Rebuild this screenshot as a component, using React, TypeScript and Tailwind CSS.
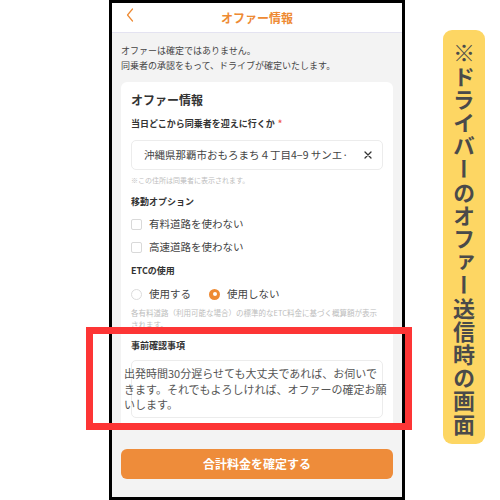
import React from "react";

const font = { fontFamily: '"Noto Sans CJK JP", "Noto Sans", sans-serif' };

export default function App() {
  return (
    <div className="relative w-[500px] h-[500px] bg-white flex flex-row" style={font}>
      {/* phone */}
      <div className="ml-[109px] w-[296px] h-[500px] border-[3px] border-black flex flex-col overflow-hidden bg-[#f3f3f3]">
        {/* header */}
        <div className="relative h-[30px] shrink-0 bg-white border-b border-[#e4e3f1] flex items-center justify-center">
          <svg className="absolute left-[14px] top-[5px]" width="8" height="14" viewBox="0 0 8 14" fill="none">
            <path d="M6.5 1 L1.5 7 L6.5 13" stroke="#ee8a33" strokeWidth="1.2" strokeLinecap="round" strokeLinejoin="round" />
          </svg>
          <span className="text-[12px] font-bold text-[#ee8a33] leading-none">オファー情報</span>
        </div>
        {/* content */}
        <div className="flex flex-col px-[9px]">
          <div className="mt-[10px] text-[9px] leading-[15px] text-[#444]">
            <div>オファーは確定ではありません。</div>
            <div>同乗者の承認をもって、ドライブが確定いたします。</div>
          </div>
          {/* card */}
          <div className="mt-[9px] bg-white rounded-[6px] px-[10px] pt-[9px] pb-[12px] flex flex-col">
            <div className="h-[18px] flex items-center text-[12px] font-bold text-[#333]">オファー情報</div>
            <div className="mt-[8px] h-[14px] flex items-center text-[9px] font-bold text-[#333]">
              当日どこから同乗者を迎えに行くか<span className="ml-[3px] text-[#f05a4a]">*</span>
            </div>
            <div className="mt-[9px] h-[30px] border border-[#ececec] rounded-[5px] flex items-center pl-[12px] pr-[10px]">
              <span className="flex-1 text-[10.5px] text-[#444] whitespace-nowrap overflow-hidden">沖縄県那覇市おもろまち４丁目4−9 サンエ·</span>
              <svg width="8" height="8" viewBox="0 0 8 8" className="ml-[8px]">
                <path d="M1 1 L7 7 M7 1 L1 7" stroke="#333" strokeWidth="1.3" strokeLinecap="round" />
              </svg>
            </div>
            <div className="mt-[4px] h-[12px] flex items-center text-[7px] text-[#bdbdbd]">※この住所は同乗者に表示されます。</div>
            <div className="mt-[9px] h-[14px] flex items-center text-[9px] font-bold text-[#333]">移動オプション</div>
            <div className="mt-[5px] h-[20px] flex items-center">
              <div className="w-[11px] h-[11px] border border-[#d9d9d9] rounded-[2px]" />
              <span className="ml-[7px] text-[10.5px] text-[#444]">有料道路を使わない</span>
            </div>
            <div className="mt-[3px] h-[20px] flex items-center">
              <div className="w-[11px] h-[11px] border border-[#d9d9d9] rounded-[2px]" />
              <span className="ml-[7px] text-[10.5px] text-[#444]">高速道路を使わない</span>
            </div>
            <div className="mt-[7px] h-[14px] flex items-center text-[9px] font-bold text-[#333]">ETCの使用</div>
            <div className="mt-[6px] h-[20px] flex items-center">
              <div className="w-[11px] h-[11px] border border-[#dcdcdc] rounded-full" />
              <span className="ml-[7px] text-[10.5px] text-[#444]">使用する</span>
              <div className="ml-[18px] w-[11px] h-[11px] rounded-full bg-[#ee8a33] flex items-center justify-center">
                <div className="w-[4px] h-[4px] rounded-full bg-white" />
              </div>
              <span className="ml-[7px] text-[10.5px] text-[#444]">使用しない</span>
            </div>
            <div className="mt-[3px] text-[7.5px] leading-[12px] text-[#bdbdbd]">
              各有料道路（利用可能な場合）の標準的なETC料金に基づく概算額が表示されます。
            </div>
            <div className="mt-[8px] h-[14px] flex items-center text-[9px] font-bold text-[#333]">事前確認事項</div>
            <div className="mt-[7px] h-[58px] border border-[#ececec] rounded-[5px] pt-[5px]">
              <div className="-ml-[8px] w-[266px] text-[11px] leading-[15.5px] text-[#555] whitespace-nowrap">
                <div>出発時間30分遅らせても大丈夫であれば、お伺いで</div>
                <div>きます。それでもよろしければ、オファーの確定お願</div>
                <div>いします。</div>
              </div>
            </div>
          </div>
          <button className="mt-[19px] h-[30px] rounded-[6px] bg-[#ee8c3a] text-white text-[12px] font-bold flex items-center justify-center">
            合計料金を確定する
          </button>
        </div>
      </div>
      {/* side label */}
      <div className="ml-[38px] mt-[30px] w-[42px] h-[414px] rounded-[9px] bg-[#fdd663] flex justify-center pt-[12px]">
        <span
          className="text-[22px] font-bold text-[#4a4a4a] leading-[42px] tracking-[1.2px]"
          style={{ writingMode: "vertical-rl" }}
        >
          ※ドライバーのオファー送信時の画面
        </span>
      </div>
      {/* red highlight */}
      <div className="absolute left-[86px] top-[327px] w-[326px] h-[103px] border-[7px] border-[#fd3535]" />
    </div>
  );
}
